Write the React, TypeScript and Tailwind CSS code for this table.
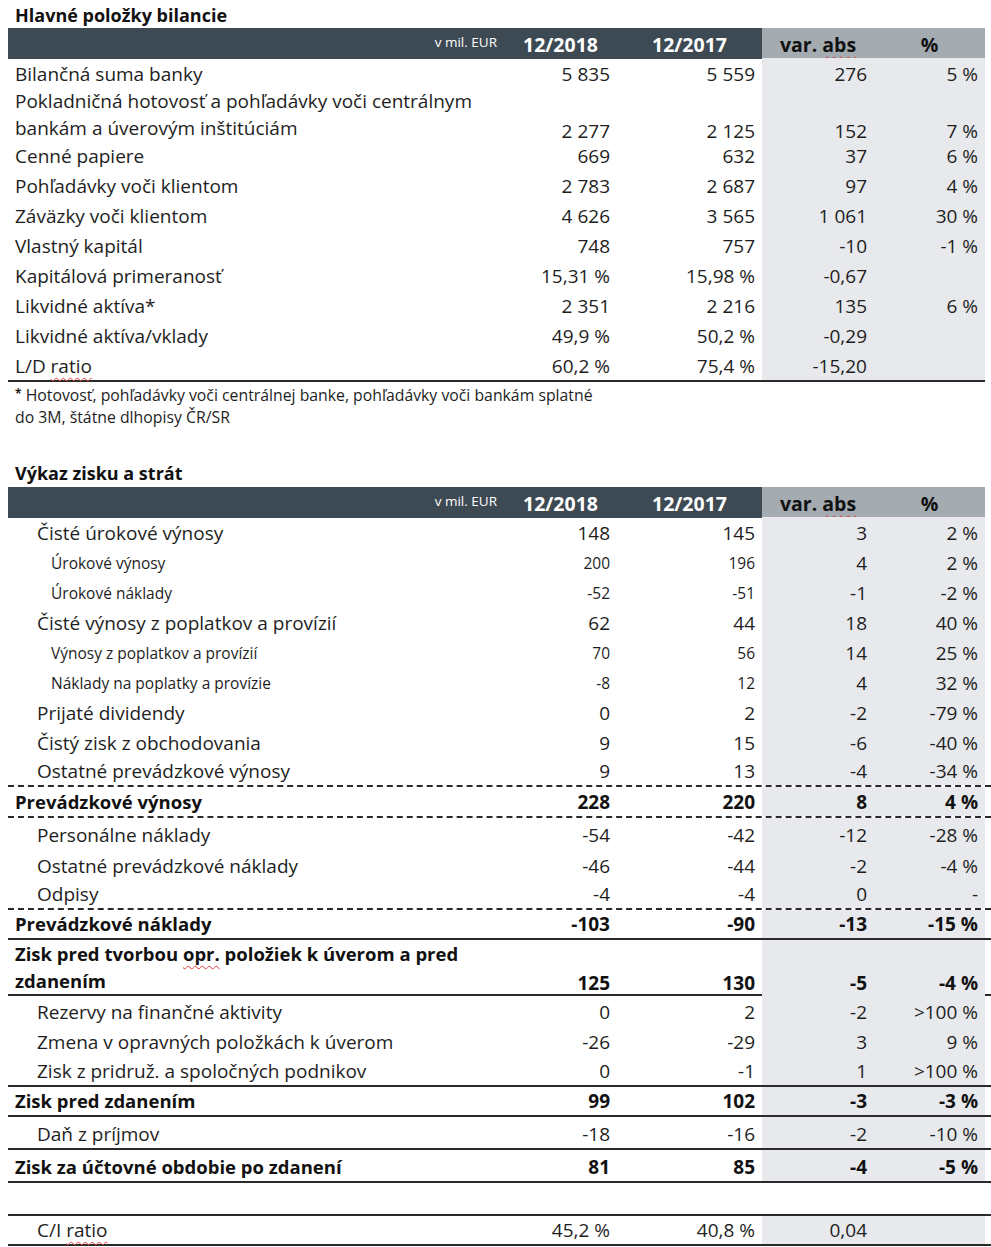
import React from "react";

type Kind = "plain" | "item" | "sub" | "bold" | "blank";
type Line = "none" | "dashed" | "solid";

type Row = {
  label: React.ReactNode;
  vals?: string[];
  kind: Kind;
  h: string;
  line?: Line;
  twoLine?: boolean;
};

const grid = "grid grid-cols-[504px_105px_145px_112px_111px]";

// spell-check squiggle like in the original document
const Squiggle = ({ children }: { children: React.ReactNode }) => (
  <span className="underline decoration-wavy decoration-[#e23b3b] decoration-1 underline-offset-[4px]">
    {children}
  </span>
);

const balance: Row[] = [
  { label: "Bilančná suma banky", vals: ["5 835", "5 559", "276", "5 %"], kind: "plain", h: "h-[30px]" },
  {
    label: (
      <>
        Pokladničná hotovosť a pohľadávky voči centrálnym
        <br />
        bankám a úverovým inštitúciám
      </>
    ),
    vals: ["2 277", "2 125", "152", "7 %"],
    kind: "plain",
    h: "h-[54px]",
    twoLine: true,
  },
  { label: "Cenné papiere", vals: ["669", "632", "37", "6 %"], kind: "plain", h: "h-[28px]" },
  { label: "Pohľadávky voči klientom", vals: ["2 783", "2 687", "97", "4 %"], kind: "plain", h: "h-[30px]" },
  { label: "Záväzky voči klientom", vals: ["4 626", "3 565", "1 061", "30 %"], kind: "plain", h: "h-[30px]" },
  { label: "Vlastný kapitál", vals: ["748", "757", "-10", "-1 %"], kind: "plain", h: "h-[30px]" },
  { label: "Kapitálová primeranosť", vals: ["15,31 %", "15,98 %", "-0,67", ""], kind: "plain", h: "h-[30px]" },
  { label: "Likvidné aktíva*", vals: ["2 351", "2 216", "135", "6 %"], kind: "plain", h: "h-[30px]" },
  { label: "Likvidné aktíva/vklady", vals: ["49,9 %", "50,2 %", "-0,29", ""], kind: "plain", h: "h-[30px]" },
  {
    label: (
      <>
        L/D <Squiggle>ratio</Squiggle>
      </>
    ),
    vals: ["60,2 %", "75,4 %", "-15,20", ""],
    kind: "plain",
    h: "h-[30px]",
  },
];

const income: Row[] = [
  { label: "Čisté úrokové výnosy", vals: ["148", "145", "3", "2 %"], kind: "item", h: "h-[30px]" },
  { label: "Úrokové výnosy", vals: ["200", "196", "4", "2 %"], kind: "sub", h: "h-[30px]" },
  { label: "Úrokové náklady", vals: ["-52", "-51", "-1", "-2 %"], kind: "sub", h: "h-[30px]" },
  { label: "Čisté výnosy z poplatkov a provízií", vals: ["62", "44", "18", "40 %"], kind: "item", h: "h-[30px]" },
  { label: "Výnosy z poplatkov a provízií", vals: ["70", "56", "14", "25 %"], kind: "sub", h: "h-[30px]" },
  { label: "Náklady na poplatky a provízie", vals: ["-8", "12", "4", "32 %"], kind: "sub", h: "h-[30px]" },
  { label: "Prijaté dividendy", vals: ["0", "2", "-2", "-79 %"], kind: "item", h: "h-[30px]" },
  { label: "Čistý zisk z obchodovania", vals: ["9", "15", "-6", "-40 %"], kind: "item", h: "h-[30px]" },
  { label: "Ostatné prevádzkové výnosy", vals: ["9", "13", "-4", "-34 %"], kind: "item", h: "h-[30px]", line: "dashed" },
  { label: "Prevádzkové výnosy", vals: ["228", "220", "8", "4 %"], kind: "bold", h: "h-[31px]", line: "dashed" },
  { label: "Personálne náklady", vals: ["-54", "-42", "-12", "-28 %"], kind: "item", h: "h-[31px]" },
  { label: "Ostatné prevádzkové náklady", vals: ["-46", "-44", "-2", "-4 %"], kind: "item", h: "h-[31px]" },
  { label: "Odpisy", vals: ["-4", "-4", "0", "-"], kind: "item", h: "h-[30px]", line: "dashed" },
  { label: "Prevádzkové náklady", vals: ["-103", "-90", "-13", "-15 %"], kind: "bold", h: "h-[30px]", line: "solid" },
  {
    label: (
      <>
        Zisk pred tvorbou <Squiggle>opr.</Squiggle> položiek k úverom a pred
        <br />
        zdanením
      </>
    ),
    vals: ["125", "130", "-5", "-4 %"],
    kind: "bold",
    h: "h-[56px]",
    line: "solid",
    twoLine: true,
  },
  { label: "Rezervy na finančné aktivity", vals: ["0", "2", "-2", ">100 %"], kind: "item", h: "h-[30px]" },
  { label: "Zmena v opravných položkách k úverom", vals: ["-26", "-29", "3", "9 %"], kind: "item", h: "h-[30px]" },
  { label: "Zisk z pridruž. a spoločných podnikov", vals: ["0", "-1", "1", ">100 %"], kind: "item", h: "h-[31px]", line: "solid" },
  { label: "Zisk pred zdanením", vals: ["99", "102", "-3", "-3 %"], kind: "bold", h: "h-[30px]", line: "solid" },
  { label: "Daň z príjmov", vals: ["-18", "-16", "-2", "-10 %"], kind: "item", h: "h-[33px]", line: "solid" },
  { label: "Zisk za účtovné obdobie po zdanení", vals: ["81", "85", "-4", "-5 %"], kind: "bold", h: "h-[33px]", line: "solid" },
  { label: "", kind: "blank", h: "h-[33px]", line: "solid" },
  {
    label: (
      <>
        C/I <Squiggle>ratio</Squiggle>
      </>
    ),
    vals: ["45,2 %", "40,8 %", "0,04", ""],
    kind: "item",
    h: "h-[30px]",
    line: "solid",
  },
];

const labelClass = (kind: Kind) => {
  switch (kind) {
    case "item":
      return "pl-[29px] text-[19px]";
    case "sub":
      return "pl-[43px] text-[15.5px]";
    case "bold":
      return "pl-[7px] text-[18.5px] font-bold text-[#111]";
    default:
      return "pl-[7px] text-[19px]";
  }
};

const TableRow = ({ row }: { row: Row }) => {
  const border =
    row.line === "dashed"
      ? "border-b-2 border-dashed border-[#2a2a2a]"
      : row.line === "solid"
      ? "border-b-2 border-solid border-[#2a2a2a]"
      : "";
  const bold = row.kind === "bold" ? "font-bold text-[#111]" : "";
  const vals = row.vals ?? ["", "", "", ""];
  return (
    <div className={`${grid} ${row.h} ${border}`}>
      <div className={`flex items-end pb-[3px] ${labelClass(row.kind)} ${row.twoLine ? "leading-[27px]" : "leading-[22px]"}`}>
        <span>{row.label}</span>
      </div>
      {vals.map((v, i) => (
        <div
          key={i}
          className={`flex items-end justify-end pr-[7px] pb-[3px] leading-[22px] ${
            row.kind === "sub" && i < 2 ? "text-[15.5px]" : "text-[19px]"
          } ${bold} ${i >= 2 && row.kind !== "blank" ? "bg-[#e7e9ec]" : ""}`}
        >
          {v}
        </div>
      ))}
    </div>
  );
};

const Header = () => (
  <div className={`${grid} h-[30px]`}>
    <div className="flex items-center justify-end pr-[15px] pb-[3px] bg-[#3e4a53] text-[13.5px] text-white">
      v mil. EUR
    </div>
    <div className="flex items-center justify-center pr-[8px] pt-[2px] bg-[#3e4a53] text-[19.5px] font-bold text-white">
      12/2018
    </div>
    <div className="flex items-center justify-center pt-[2px] bg-[#3e4a53] text-[19.5px] font-bold text-white">
      12/2017
    </div>
    <div className="flex items-center justify-center pt-[2px] bg-[#a4acb2] text-[19.5px] font-bold text-[#111]">
      <span>
        var. <Squiggle>abs</Squiggle>
      </span>
    </div>
    <div className="flex items-center justify-center pt-[2px] bg-[#a4acb2] text-[19.5px] font-bold text-[#111]">
      %
    </div>
  </div>
);

export default function App() {
  return (
    <div className="w-[991px] h-[1247px] bg-white pl-2 text-[#1e1e1e] font-['Open_Sans','Lato',sans-serif] overflow-hidden">
      <div className="h-[28px] flex items-end pl-[7px] pb-[2px] text-[18px] font-bold text-[#111] leading-[22px]">
        Hlavné položky bilancie
      </div>
      <Header />
      {balance.map((r, i) => (
        <TableRow key={i} row={r} />
      ))}
      <div className="w-[977px] border-b-2 border-[#2a2a2a]" />
      <div className="h-[46px] pl-[7px] pt-[2px] text-[15.8px] leading-[22px]">
        <span className="relative -top-[3px] text-[12px] font-bold leading-none">*</span> Hotovosť, pohľadávky voči centrálnej banke, pohľadávky voči bankám splatné
        <br />
        do 3M, štátne dlhopisy ČR/SR
      </div>
      <div className="h-[59px] flex items-end pl-[7px] pb-[3px] text-[18px] font-bold text-[#111] leading-[22px]">
        Výkaz zisku a strát
      </div>
      <Header />
      {income.map((r, i) => (
        <TableRow key={i} row={r} />
      ))}
    </div>
  );
}
